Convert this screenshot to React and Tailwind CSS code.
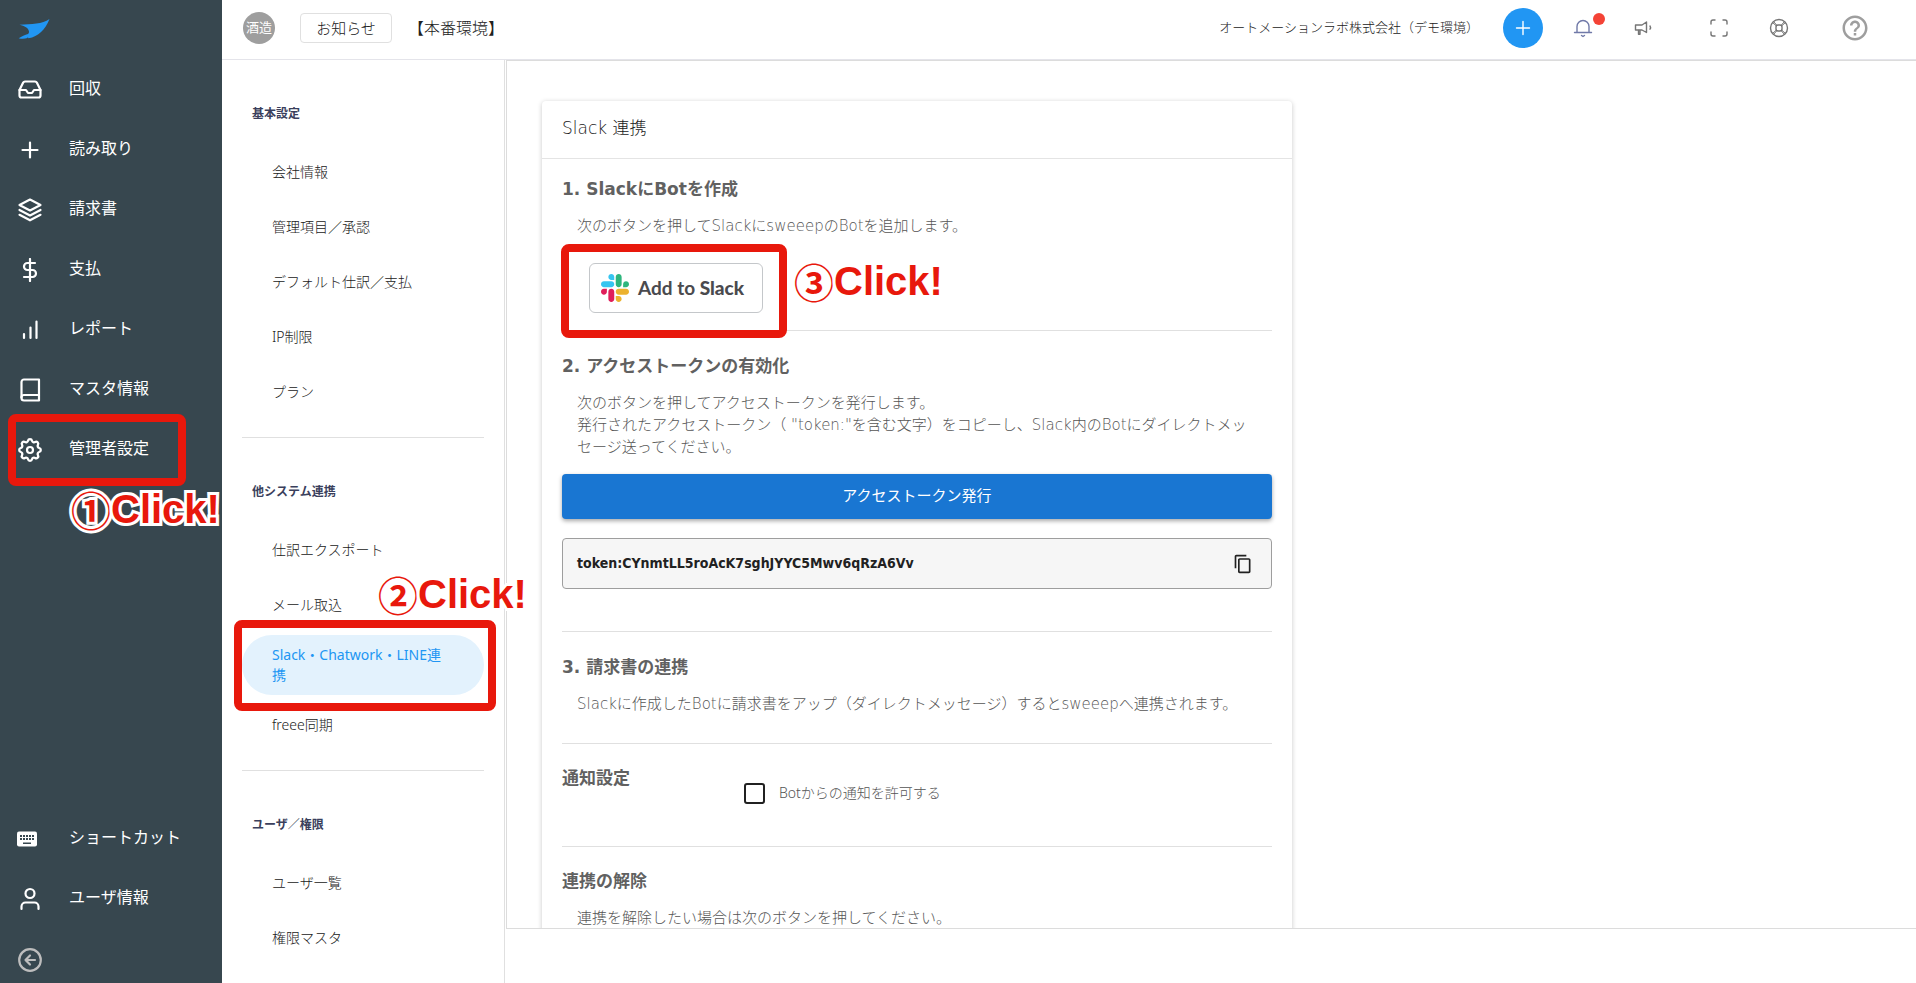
import React from "react";

const FONT = "font-['Noto_Sans','Noto_Sans_CJK_JP',sans-serif]";

function Feather({ children, className = "size-6" }) {
  return (
    <svg viewBox="0 0 24 24" fill="none" stroke="currentColor" strokeWidth="2.200" strokeLinecap="round" strokeLinejoin="round" className={className} aria-hidden="true">
      {children}
    </svg>
  );
}

const icons = {
  inbox: (
    <Feather>
      <polyline points="22.500 12 16 12 14 15 10 15 8 12 1.500 12" />
      <path d="M5.200 4.600 1.500 12v5.500a2 2 0 0 0 2 2h17a2 2 0 0 0 2-2V12l-3.700-7.400A2 2 0 0 0 17 3.500H7a2 2 0 0 0-1.800 1.100z" />
    </Feather>
  ),
  plus: (
    <Feather>
      <path d="M12 4.500v15M4.500 12h15" />
    </Feather>
  ),
  layers: (
    <Feather>
      <path d="M12 1.500 22.500 7 12 12.500 1.500 7z" />
      <path d="m1.500 12 10.500 5.500 10.500-5.500" />
      <path d="m1.500 16.800 10.500 5.500 10.500-5.500" />
    </Feather>
  ),
  dollar: (
    <Feather>
      <path d="M12 1v22M17 5H9.500a3.500 3.500 0 0 0 0 7h5a3.500 3.500 0 0 1 0 7H6" />
    </Feather>
  ),
  bars: (
    <Feather>
      <path d="M18.500 20V3.500M12.500 20V9.500M6 20v-4" />
    </Feather>
  ),
  book: (
    <Feather>
      <path d="M3.500 19.500A2.500 2.500 0 0 1 6 17h15" />
      <path d="M6 1.500h15v21H6A2.500 2.500 0 0 1 3.500 20V4A2.500 2.500 0 0 1 6 1.500z" />
    </Feather>
  ),
  gear: (
    <Feather>
      <circle cx="12" cy="12" r="3" />
      <path d="M10.325 4.317c.426-1.756 2.924-1.756 3.350 0a1.724 1.724 0 0 0 2.573 1.066c1.543-.94 3.310.826 2.370 2.370a1.724 1.724 0 0 0 1.065 2.572c1.756.426 1.756 2.924 0 3.350a1.724 1.724 0 0 0-1.066 2.573c.94 1.543-.826 3.310-2.370 2.370a1.724 1.724 0 0 0-2.572 1.065c-.426 1.756-2.924 1.756-3.350 0a1.724 1.724 0 0 0-2.573-1.066c-1.543.94-3.310-.826-2.370-2.370a1.724 1.724 0 0 0-1.065-2.572c-1.756-.426-1.756-2.924 0-3.350a1.724 1.724 0 0 0 1.066-2.573c-.94-1.543.826-3.310 2.370-2.370 1 .608 2.296.07 2.572-1.065z" transform="translate(-2.400 -2.400) scale(1.200)" strokeWidth="1.900" />
    </Feather>
  ),
  keyboard: (
    <svg viewBox="0 0 24 24" className="size-6 overflow-visible" aria-hidden="true">
      <rect x="-1" y="4.500" width="20" height="15" rx="2" fill="currentColor" />
      <g fill="#37474f">
        {[2, 5, 8, 11, 14].map((x) => (
          <React.Fragment key={x}>
            <rect x={x} y="8" width="2" height="2" />
            <rect x={x} y="11" width="2" height="2" />
          </React.Fragment>
        ))}
        <rect x="5" y="15.500" width="8" height="1.500" />
      </g>
    </svg>
  ),
  user: (
    <Feather>
      <path d="M20.500 22v-2.500a4 4 0 0 0-4-4h-9a4 4 0 0 0-4 4V22" />
      <circle cx="12" cy="6.500" r="4.500" />
    </Feather>
  ),
};

const mainNav = [
  ["inbox", "回収"],
  ["plus", "読み取り"],
  ["layers", "請求書"],
  ["dollar", "支払"],
  ["bars", "レポート"],
  ["book", "マスタ情報"],
  ["gear", "管理者設定"],
];

const footNav = [
  ["keyboard", "ショートカット"],
  ["user", "ユーザ情報"],
];

const sections = [
  { title: "基本設定", items: ["会社情報", "管理項目／承認", "デフォルト仕訳／支払", "IP制限", "プラン"] },
  { title: "他システム連携", items: ["仕訳エクスポート", "メール取込", "Slack・Chatwork・LINE連携", "freee同期"] },
  { title: "ユーザ／権限", items: ["ユーザ一覧", "権限マスタ"] },
];
const activeItem = "Slack・Chatwork・LINE連携";

function Frame({ className }) {
  return <div className={`pointer-events-none absolute z-20 rounded-lg border-8 border-[#e8180c] ${className}`} />;
}

function Callout({ mark, className }) {
  return (
    <div className={`pointer-events-none absolute z-30 flex items-center leading-10 font-bold whitespace-nowrap text-[#e8180c] [paint-order:stroke_fill] [-webkit-text-stroke:6px_white] ${className}`}>
      <span className="font-['Noto_Sans_CJK_JP'] text-[40px]">{mark}</span>
      <span className="font-['Liberation_Sans'] text-[40px]">Click!</span>
    </div>
  );
}

function NavLink({ icon, label }) {
  return (
    <a href="#" className="flex h-15 items-center gap-[27px] pl-[18px] text-base text-white">
      {icons[icon]}
      <span className="pb-[5px]">{label}</span>
    </a>
  );
}

function Sidebar() {
  return (
    <nav className="relative flex w-[222px] shrink-0 flex-col bg-[#37474f]">
      <a href="#" aria-label="ホーム" className="flex h-15 items-center pb-[3px] pl-[18px]">
        <svg viewBox="0 0 32 22" className="h-[22px] w-8" aria-hidden="true">
          <path d="M31.500 1C24 6.200 14 6 1.500 6.800 6.500 8 10.500 9.800 11 13.500c.1 1.200-.3 2-1 2.400-3 1-6.500 2.300-9.300 4.300 3 .9 6.300.7 8.800-.2l.2-1 .8 1.300C20.500 18.500 27 12 31.500 1z" fill="#2196f3" />
        </svg>
      </a>
      {mainNav.map(([icon, label]) =>
        icon === "gear" ? (
          <div key={label} className="relative">
            <NavLink icon={icon} label={label} />
            <Frame className="-top-[6px] left-2 h-[72px] w-[178px]" />
            <Callout mark="①" className="top-[69px] left-[71px]" />
          </div>
        ) : (
          <NavLink key={label} icon={icon} label={label} />
        )
      )}
      <div className="mt-auto">
        {footNav.map(([icon, label]) => (
          <NavLink key={label} icon={icon} label={label} />
        ))}
        <button type="button" aria-label="メニューを閉じる" className="mt-2 flex h-[46px] items-center pl-[18px] text-[#bdbdbd]">
          <Feather>
            <circle cx="12" cy="12" r="10.800" />
            <path d="M17 12H7.500M12 7.500 7.500 12l4.500 4.500" />
          </Feather>
        </button>
      </div>
    </nav>
  );
}

function SettingsNav() {
  return (
    <aside className="w-[283px] shrink-0 border-r border-[#e0e0e0] pr-5 pl-5">
      {sections.map((s, i) => (
        <section key={s.title} className={i ? "mt-5 border-t border-[#e0e0e0] pt-11" : "pt-11"}>
          <h2 className="pl-[10px] text-xs leading-5 font-bold text-[#3a3f5c]">{s.title}</h2>
          <ul className="mt-[23px] flex flex-col gap-[5px]">
            {s.items.map((item) =>
              item === activeItem ? (
                <li key={item} className="relative">
                  <a href="#" aria-current="page" className="block rounded-[30px] bg-[#e3f2fd] py-[10px] pr-[30px] pl-[30px] text-sm leading-5 font-normal break-all text-[#2196f3]">
                    {item}
                  </a>
                  <Frame className="-top-[15px] -left-2 h-[91px] w-[262px]" />
                  <Callout mark="②" className="-top-[61px] left-[136px]" />
                </li>
              ) : (
                <li key={item}>
                  <a href="#" className="flex h-[50px] items-center pb-px pl-[30px] text-sm font-light text-[#212121]">{item}</a>
                </li>
              )
            )}
          </ul>
        </section>
      ))}
    </aside>
  );
}

function HeaderIcon({ label, children, className = "text-[#757575]" }) {
  return (
    <button type="button" aria-label={label} className={`relative flex size-10 items-center justify-center ${className}`}>
      {children}
    </button>
  );
}

function Line({ children, className = "size-5" }) {
  return (
    <svg viewBox="0 0 20 20" fill="none" stroke="currentColor" strokeWidth="1.400" strokeLinecap="round" strokeLinejoin="round" className={className} aria-hidden="true">
      {children}
    </svg>
  );
}

function Header() {
  return (
    <header className="flex h-15 shrink-0 items-center border-b border-[#e4e4ea] pr-[41px] pb-1 pl-[21px]">
      <span className="flex size-8 items-center justify-center rounded-full bg-[#9e9e9e] text-[13px] text-white">酒造</span>
      <button type="button" className="ml-[25px] h-[30px] w-[92px] rounded border border-[#e0e0e0] text-[15px] leading-5 font-light text-[#212121]">お知らせ</button>
      <span className="ml-4 text-base font-light text-[#212121]">【本番環境】</span>
      <span className="ml-auto text-[13px] font-light text-[#212121]">オートメーションラボ株式会社（デモ環境）</span>
      <div className="ml-6 flex items-center gap-5">
        <button type="button" aria-label="追加" className="flex size-10 items-center justify-center rounded-full bg-[#2196f3] text-white">
          <Line>
            <path d="M10 3.500v13M3.500 10h13" />
          </Line>
        </button>
        <HeaderIcon label="通知" className="text-[#7079a8]">
          <Line>
            <path d="M4 14V8.500a6 6 0 0 1 12 0V14M1.500 14.500h17M8.500 17.500l1.500 1 1.500-1" />
          </Line>
          <span className="absolute top-[5px] -right-[2px] size-3 rounded-full bg-[#f44336]" />
        </HeaderIcon>
        <HeaderIcon label="アナウンス">
          <Line>
            <path d="M2.500 7H9l4.500-3v10.500L9 12H2.500z" />
            <path d="M5.500 12.500v3.700H7v-3.700M17 8c.7 1 .7 2.200 0 3.200" />
          </Line>
        </HeaderIcon>
        <HeaderIcon label="全画面" className="ml-4 text-[#757575]">
          <Line>
            <path d="M2 6V4a2 2 0 0 1 2-2h2M14 2h2a2 2 0 0 1 2 2v2M18 14v2a2 2 0 0 1-2 2h-2M6 18H4a2 2 0 0 1-2-2v-2" />
          </Line>
        </HeaderIcon>
        <HeaderIcon label="サポート">
          <Line>
            <circle cx="10" cy="10" r="8.500" />
            <rect x="7" y="7" width="6" height="6" rx="2" />
            <path d="m3.500 4.500 4 3.500M4.500 3.500l3.500 4M16.500 4.500l-4 3.500M15.500 3.500l-3.500 4M3.500 15.500l4-3.500M4.500 16.500l3.500-4M16.500 15.500l-4-3.500M15.500 16.500l-3.500-4" strokeWidth="1" />
          </Line>
        </HeaderIcon>
        <HeaderIcon label="ヘルプ" className="ml-4 text-[#9e9e9e]">
          <svg viewBox="0 0 24 24" className="size-[30px]" fill="currentColor" aria-hidden="true">
            <path d="M11 18h2v-2h-2v2zm1-16C6.480 2 2 6.480 2 12s4.480 10 10 10 10-4.480 10-10S17.520 2 12 2zm0 18c-4.410 0-8-3.590-8-8s3.590-8 8-8 8 3.590 8 8-3.590 8-8 8zm0-14c-2.210 0-4 1.790-4 4h2c0-1.100.9-2 2-2s2 .9 2 2c0 2-3 1.750-3 5h2c0-2.250 3-2.500 3-5 0-2.210-1.790-4-4-4z" />
          </svg>
        </HeaderIcon>
      </div>
    </header>
  );
}

function SlackLogo() {
  return (
    <svg viewBox="0 0 122.800 122.800" className="size-7" aria-hidden="true">
      <path d="M25.800 77.600c0 7.100-5.800 12.900-12.900 12.900S0 84.700 0 77.600s5.800-12.900 12.900-12.900h12.900v12.900zm6.500 0c0-7.100 5.800-12.900 12.900-12.900s12.900 5.800 12.900 12.900v32.300c0 7.100-5.800 12.900-12.900 12.900s-12.900-5.800-12.900-12.900V77.600z" fill="#e01e5a" />
      <path d="M45.200 25.800c-7.100 0-12.900-5.800-12.900-12.900S38.100 0 45.200 0s12.900 5.800 12.900 12.900v12.900H45.200zm0 6.500c7.100 0 12.900 5.800 12.900 12.900s-5.800 12.900-12.900 12.900H12.900C5.800 58.100 0 52.300 0 45.200s5.800-12.900 12.900-12.900h32.300z" fill="#36c5f0" />
      <path d="M97 45.200c0-7.100 5.800-12.900 12.900-12.900s12.900 5.800 12.900 12.900-5.800 12.900-12.900 12.900H97V45.200zm-6.500 0c0 7.100-5.800 12.900-12.900 12.900s-12.900-5.800-12.900-12.900V12.900C64.700 5.800 70.500 0 77.600 0s12.900 5.800 12.900 12.900v32.300z" fill="#2eb67d" />
      <path d="M77.600 97c7.100 0 12.900 5.800 12.900 12.900s-5.800 12.900-12.900 12.900-12.900-5.800-12.900-12.900V97h12.900zm0-6.500c-7.100 0-12.900-5.800-12.900-12.900s5.800-12.900 12.900-12.900h32.300c7.100 0 12.900 5.800 12.900 12.900s-5.800 12.900-12.900 12.900H77.600z" fill="#ecb22e" />
    </svg>
  );
}

const CARD_FONT = "font-['DejaVu_Sans','Noto_Sans_CJK_JP',sans-serif]";

function Heading({ children }) {
  return <h3 className={`text-[17px] leading-6 font-bold text-[#616161] ${CARD_FONT}`}>{children}</h3>;
}

function Note({ children, className }) {
  return <p className={`px-[15px] text-[15px] leading-[22px] font-light text-[#555555] ${CARD_FONT} ${className}`}>{children}</p>;
}

function SlackCard() {
  return (
    <article className="w-[750px] rounded bg-white shadow-[0_1px_5px_rgba(0,0,0,0.22)]">
      <h2 className={`border-b border-[#e4e4e4] px-5 pt-[15px] pb-[18px] text-[17px] leading-6 font-light text-[#212121] ${CARD_FONT}`}>Slack 連携</h2>
      <div className="px-5 pb-10">
        <section className="relative border-b border-[#e0e0e0] pt-[18px] pb-[17px]">
          <Heading>1. SlackにBotを作成</Heading>
          <Note className="mt-[14px]">次のボタンを押してSlackにsweeepのBotを追加します。</Note>
          <button type="button" className="mt-[26px] ml-[27px] flex h-[50px] w-[174px] items-center gap-[9px] rounded-md border border-[#c4c7ca] pl-[11px] font-['Lato'] text-[19px] leading-6 font-bold whitespace-nowrap text-[#4a4a4e]">
            <SlackLogo />
            <span>
              Add to <span className="font-black">Slack</span>
            </span>
          </button>
          <Frame className="top-[85px] -left-px h-[94px] w-[226px]" />
          <Callout mark="③" className="top-[102px] left-[232px]" />
        </section>
        <section className="border-b border-[#e0e0e0] pt-[23px] pb-[42px]">
          <Heading>2. アクセストークンの有効化</Heading>
          <Note className="mt-[14px]">
            次のボタンを押してアクセストークンを発行します。
            <br />
            発行されたアクセストークン（ "token:"を含む文字）をコピーし、Slack内のBotにダイレクトメッセージ送ってください。
          </Note>
          <button type="button" className="mt-4 h-[45px] w-full rounded bg-[#1976d2] pb-[2px] text-[15px] text-white shadow-[0_2px_4px_rgba(0,0,0,0.35)]">アクセストークン発行</button>
          <div className="mt-[19px] flex h-[51px] items-center justify-between rounded border border-[#9e9e9e] bg-[#f6f6f6] pr-[18px] pl-[14px] text-[#212121]">
            <output className="pb-[2px] font-['DejaVu_Sans_Condensed'] text-sm font-bold">token:CYnmtLL5roAcK7sghJYYC5Mwv6qRzA6Vv</output>
            <button type="button" aria-label="コピー">
              <svg viewBox="0 0 24 24" className="size-5" fill="currentColor" aria-hidden="true">
                <path d="M16 1H4c-1.100 0-2 .9-2 2v14h2V3h12V1zm3 4H8c-1.100 0-2 .9-2 2v14c0 1.100.9 2 2 2h11c1.100 0 2-.9 2-2V7c0-1.100-.9-2-2-2zm0 16H8V7h11v14z" />
              </svg>
            </button>
          </div>
        </section>
        <section className="border-b border-[#e0e0e0] pt-[23px] pb-7">
          <Heading>3. 請求書の連携</Heading>
          <Note className="mt-[14px]">Slackに作成したBotに請求書をアップ（ダイレクトメッセージ）するとsweeepへ連携されます。</Note>
        </section>
        <section className="flex border-b border-[#e0e0e0] pt-[22px] pb-[42px]">
          <div className="w-[182px]">
            <Heading>通知設定</Heading>
          </div>
          <label className="flex items-center gap-[14px] pt-4 text-sm leading-[22px] font-light text-[#555555]">
            <input type="checkbox" className="size-[21px] appearance-none rounded-[3px] border-2 border-[#212121] checked:bg-[#1976d2]" />
            Botからの通知を許可する
          </label>
        </section>
        <section className="pt-[22px]">
          <Heading>連携の解除</Heading>
          <Note className="mt-[14px]">連携を解除したい場合は次のボタンを押してください。</Note>
        </section>
      </div>
    </article>
  );
}

export default function App() {
  return (
    <div lang="ja" className={`flex h-screen overflow-hidden bg-white ${FONT}`}>
      <Sidebar />
      <div className="flex min-w-0 flex-1 flex-col">
        <Header />
        <div className="flex min-h-0 flex-1">
          <SettingsNav />
          <main className="mb-[54px] ml-px min-w-0 flex-1 overflow-hidden border-t border-b border-l border-[#dcdcdc] pt-10 pl-[35px]">
            <SlackCard />
          </main>
        </div>
      </div>
    </div>
  );
}
